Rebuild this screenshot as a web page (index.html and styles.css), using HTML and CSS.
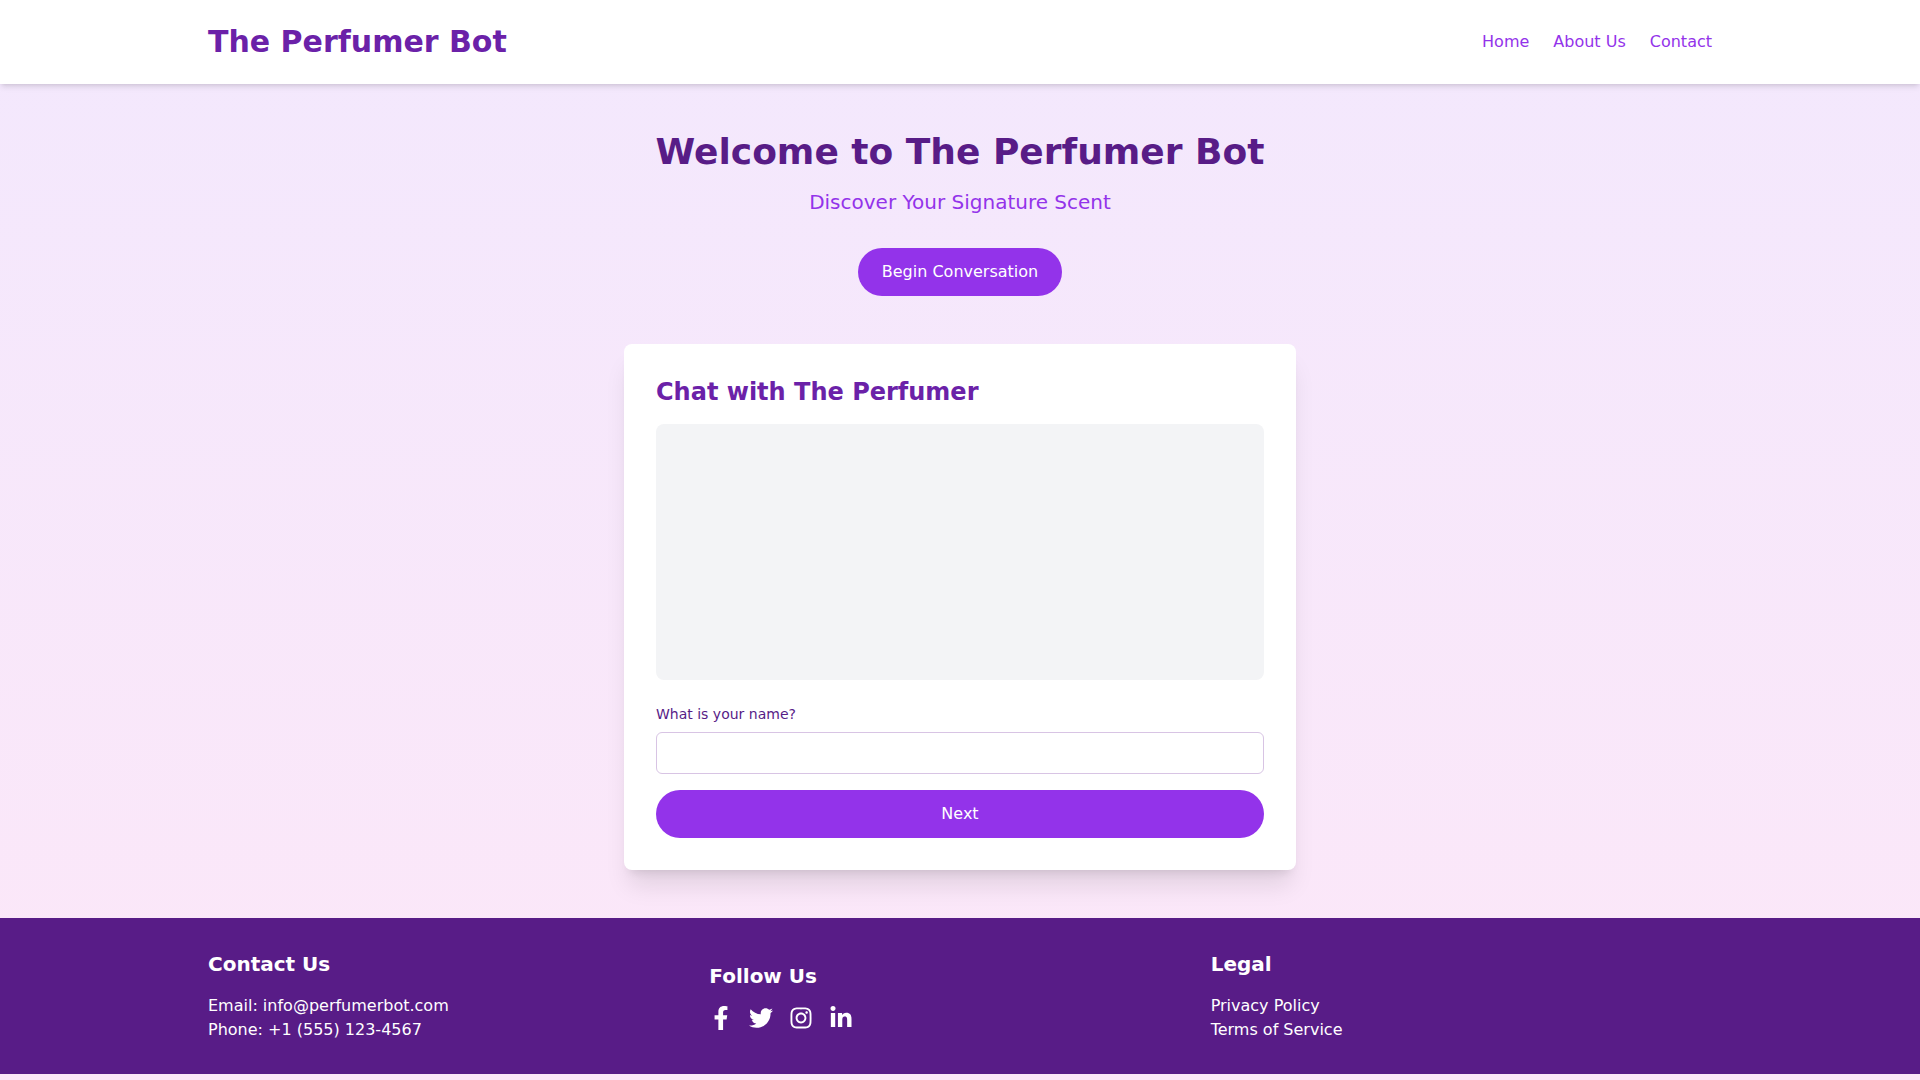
FILE: index.html
```html
<!DOCTYPE html>
<html lang="en">
<head>
    <meta charset="UTF-8">
    <meta name="viewport" content="width=device-width, initial-scale=1.0">
    <title>The Perfumer Bot</title>
    <link rel="stylesheet" href="styles.css">
</head>
<body>
    <header class="site-header">
        <div class="container header-row">
            <div class="logo">The Perfumer Bot</div>
            <nav class="nav">
                <a href="#">Home</a>
                <a href="#">About Us</a>
                <a href="#">Contact</a>
            </nav>
        </div>
    </header>

    <main class="main">
        <h1>Welcome to The Perfumer Bot</h1>
        <p class="tagline">Discover Your Signature Scent</p>
        <button type="button" class="btn btn-start">Begin Conversation</button>

        <section class="chat-card">
            <h2>Chat with The Perfumer</h2>
            <div class="chat-log"></div>
            <form class="chat-form">
                <label for="answer">What is your name?</label>
                <input type="text" id="answer">
                <button type="button" class="btn btn-next">Next</button>
            </form>
        </section>
    </main>

    <footer class="site-footer">
        <div class="container footer-grid">
            <div class="footer-col">
                <h3>Contact Us</h3>
                <p>Email: info@perfumerbot.com</p>
                <p>Phone: +1 (555) 123-4567</p>
            </div>
            <div class="footer-col footer-social">
                <h3>Follow Us</h3>
                <div class="social-icons">
                    <a href="#" aria-label="Facebook">
                        <svg viewBox="0 0 320 512"><path d="M279.14 288l14.22-92.66h-88.91v-60.13c0-25.35 12.42-50.06 52.24-50.06h40.42V6.26S260.43 0 225.36 0c-73.22 0-121.08 44.38-121.08 124.72v70.62H22.89V288h81.39v224h100.17V288z"/></svg>
                    </a>
                    <a href="#" aria-label="Twitter">
                        <svg viewBox="0 0 512 512"><path d="M459.37 151.716c.325 4.548.325 9.097.325 13.645 0 138.72-105.583 298.558-298.558 298.558-59.452 0-114.68-17.219-161.137-47.106 8.447.974 16.568 1.299 25.34 1.299 49.055 0 94.213-16.568 130.274-44.832-46.132-.975-84.792-31.188-98.112-72.772 6.498.974 12.995 1.624 19.818 1.624 9.421 0 18.843-1.3 27.614-3.573-48.081-9.747-84.143-51.98-84.143-102.985v-1.299c13.969 7.797 30.214 12.67 47.431 13.319-28.264-18.843-46.781-51.005-46.781-87.391 0-19.492 5.197-37.36 14.294-52.954 51.655 63.675 129.3 105.258 216.365 109.807-1.624-7.797-2.599-15.918-2.599-24.04 0-57.828 46.782-104.934 104.934-104.934 30.213 0 57.502 12.67 76.67 33.137 23.715-4.548 46.456-13.32 66.599-25.34-7.798 24.366-24.366 44.833-46.132 57.827 21.117-2.273 41.584-8.122 60.426-16.243-14.292 20.791-32.161 39.308-52.628 54.253z"/></svg>
                    </a>
                    <a href="#" aria-label="Instagram">
                        <svg viewBox="0 0 448 512"><path d="M224.1 141c-63.6 0-114.9 51.3-114.9 114.9s51.3 114.9 114.9 114.9S339 319.5 339 255.9 287.7 141 224.1 141zm0 189.6c-41.1 0-74.7-33.5-74.7-74.7s33.5-74.7 74.7-74.7 74.7 33.5 74.7 74.7-33.6 74.7-74.7 74.7zm146.4-194.3c0 14.9-12 26.8-26.8 26.8-14.9 0-26.8-12-26.8-26.8s12-26.8 26.8-26.8 26.8 12 26.8 26.8zm76.1 27.2c-1.7-35.9-9.9-67.7-36.2-93.9-26.2-26.2-58-34.4-93.9-36.2-37-2.1-147.9-2.1-184.9 0-35.8 1.7-67.6 9.9-93.9 36.1s-34.4 58-36.2 93.9c-2.1 37-2.1 147.9 0 184.9 1.7 35.9 9.9 67.7 36.2 93.9s58 34.4 93.9 36.2c37 2.1 147.9 2.1 184.9 0 35.9-1.7 67.7-9.9 93.9-36.2 26.2-26.2 34.4-58 36.2-93.9 2.1-37 2.1-147.8 0-184.8zM398.8 388c-7.8 19.6-22.9 34.7-42.6 42.6-29.5 11.7-99.5 9-132.1 9s-102.7 2.6-132.1-9c-19.6-7.8-34.7-22.9-42.6-42.6-11.7-29.5-9-99.5-9-132.1s-2.6-102.7 9-132.1c7.8-19.6 22.9-34.7 42.6-42.6 29.5-11.7 99.5-9 132.1-9s102.7-2.6 132.1 9c19.6 7.8 34.7 22.9 42.6 42.6 11.7 29.5 9 99.5 9 132.1s2.7 102.7-9 132.1z"/></svg>
                    </a>
                    <a href="#" aria-label="LinkedIn">
                        <svg viewBox="0 0 448 512"><path d="M100.28 448H7.4V148.9h92.88zM53.79 108.1C24.09 108.1 0 83.5 0 53.8a53.79 53.79 0 0 1 107.58 0c0 29.7-24.1 54.3-53.79 54.3zM447.9 448h-92.68V302.4c0-34.7-.7-79.2-48.29-79.2-48.29 0-55.69 37.7-55.69 76.7V448h-92.78V148.9h89.08v40.8h1.3c12.4-23.5 42.69-48.3 87.88-48.3 94 0 111.28 61.9 111.28 142.3V448z"/></svg>
                    </a>
                </div>
            </div>
            <div class="footer-col">
                <h3>Legal</h3>
                <p><a href="#">Privacy Policy</a></p>
                <p><a href="#">Terms of Service</a></p>
            </div>
        </div>
    </footer>
</body>
</html>
```

FILE: styles.css
```css
* {
    box-sizing: border-box;
}
body {
    margin: 0;
    min-height: 100vh;
    font-family: "DejaVu Sans", sans-serif;
    font-size: 16px;
    line-height: 24px;
    background: linear-gradient(to bottom, #f3e8fd, #fce7f8);
}
a {
    color: inherit;
    text-decoration: none;
}
.container {
    max-width: 1536px;
    margin: 0 auto;
    padding: 0 16px;
}
.site-header {
    background-color: #fff;
    padding: 16px 0;
    box-shadow: 0 4px 6px -1px rgba(0, 0, 0, 0.1), 0 2px 4px -2px rgba(0, 0, 0, 0.1);
}
.header-row {
    display: flex;
    justify-content: space-between;
    align-items: center;
}
.logo {
    font-size: 30px;
    line-height: 36px;
    font-weight: 700;
    color: #6b21a8;
    padding: 8px 0;
}
.nav {
    display: flex;
    gap: 24px;
    color: #9333ea;
}
.main {
    padding: 48px 16px;
    text-align: center;
}
h1 {
    margin: 0 0 16px;
    font-size: 36px;
    line-height: 40px;
    font-weight: 700;
    color: #581c87;
}
.tagline {
    margin: 0 0 32px;
    font-size: 20px;
    line-height: 28px;
    color: #9333ea;
}
.btn {
    display: block;
    border: none;
    border-radius: 9999px;
    padding: 12px 24px;
    background-color: #9333ea;
    color: #fff;
    font-family: inherit;
    font-size: 16px;
    line-height: 24px;
    cursor: pointer;
}
.btn-start {
    margin: 0 auto 48px;
}
.btn-next {
    width: 100%;
}
.chat-card {
    width: 672px;
    margin: 0 auto;
    padding: 32px;
    background-color: #fff;
    border-radius: 8px;
    text-align: left;
    box-shadow: 0 20px 25px -5px rgba(0, 0, 0, 0.1), 0 8px 10px -6px rgba(0, 0, 0, 0.1);
}
.chat-card h2 {
    margin: 0 0 16px;
    font-size: 24px;
    line-height: 32px;
    font-weight: 700;
    color: #6b21a8;
}
.chat-log {
    height: 256px;
    margin-bottom: 16px;
    background-color: #f3f4f6;
    border-radius: 8px;
}
.chat-form label {
    display: block;
    margin: 24px 0 8px;
    font-size: 14px;
    line-height: 20px;
    color: #581c87;
}
.chat-form input {
    display: block;
    width: 100%;
    height: 42px;
    margin-bottom: 16px;
    padding: 8px 16px;
    border: 1px solid #d8c4e4;
    border-radius: 6px;
    background-color: #fff;
}
.site-footer {
    background-color: #581c87;
    color: #fff;
    padding: 32px 0;
}
.footer-grid {
    display: grid;
    grid-template-columns: repeat(3, 1fr);
}
.footer-col h3 {
    margin: 0 0 16px;
    font-size: 20px;
    line-height: 28px;
    font-weight: 700;
}
.footer-col p {
    margin: 0;
}
.footer-social {
    align-self: center;
}
.social-icons {
    display: flex;
    gap: 16px;
}
.social-icons a {
    display: block;
    width: 24px;
    height: 24px;
}
.social-icons svg {
    display: block;
    width: 24px;
    height: 24px;
    fill: #fff;
}
```
